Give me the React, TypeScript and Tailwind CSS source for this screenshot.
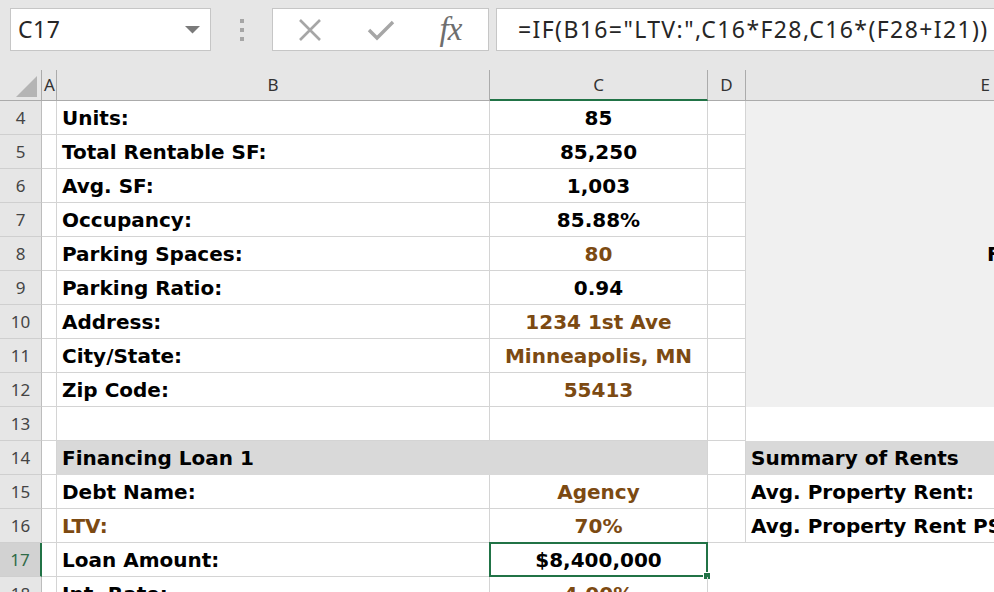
import React from "react";

const GRID = "border-[#d4d4d4]";
const BROWN = "text-[#7c4a12]";

type RowSpec = {
  n: number;
  b?: string;
  c?: string;
  bBrown?: boolean;
  cBrown?: boolean;
  band?: boolean;
  e?: "panel" | "blank" | "band" | "text" | "none";
  eText?: string;
  eMark?: string;
  selected?: boolean;
};

const rows: RowSpec[] = [
  { n: 4, b: "Units:", c: "85", e: "panel" },
  { n: 5, b: "Total Rentable SF:", c: "85,250", e: "panel" },
  { n: 6, b: "Avg. SF:", c: "1,003", e: "panel" },
  { n: 7, b: "Occupancy:", c: "85.88%", e: "panel" },
  { n: 8, b: "Parking Spaces:", c: "80", cBrown: true, e: "panel", eMark: "F" },
  { n: 9, b: "Parking Ratio:", c: "0.94", e: "panel" },
  { n: 10, b: "Address:", c: "1234 1st Ave", cBrown: true, e: "panel" },
  { n: 11, b: "City/State:", c: "Minneapolis, MN", cBrown: true, e: "panel" },
  { n: 12, b: "Zip Code:", c: "55413", cBrown: true, e: "panel" },
  { n: 13, e: "blank" },
  { n: 14, b: "Financing Loan 1", band: true, e: "band", eText: "Summary of Rents" },
  { n: 15, b: "Debt Name:", c: "Agency", cBrown: true, e: "text", eText: "Avg. Property Rent:" },
  { n: 16, b: "LTV:", bBrown: true, c: "70%", cBrown: true, e: "text", eText: "Avg. Property Rent PSF:" },
  { n: 17, b: "Loan Amount:", c: "$8,400,000", e: "none", selected: true },
  { n: 18, b: "Int. Rate:", c: "4.00%", cBrown: true, e: "none" },
];

const cellFont = "font-['DejaVu_Sans',sans-serif] font-bold text-[20px] leading-none";

function NameBox() {
  return (
    <div className="w-[201px] h-[43px] bg-white border border-[#c6c6c6] flex items-center justify-between pl-[7px] pr-[10px]">
      <span className="text-[23px] tracking-[0.5px] text-[#262626] font-['Noto_Sans',sans-serif] leading-none">C17</span>
      <svg width="15" height="8" viewBox="0 0 15 8">
        <path d="M0 0 L15 0 L7.5 7.5 Z" fill="#7a7a7a" />
      </svg>
    </div>
  );
}

function Grip() {
  return (
    <div className="w-[61px] h-[43px] flex flex-col items-center justify-center gap-[5px]">
      <div className="w-[4px] h-[4px] bg-[#a6a6a6]" />
      <div className="w-[4px] h-[4px] bg-[#a6a6a6]" />
      <div className="w-[4px] h-[4px] bg-[#a6a6a6]" />
    </div>
  );
}

function FormulaButtons() {
  return (
    <div className="w-[217px] h-[43px] bg-white border border-[#c6c6c6] flex items-center">
      <div className="w-[74px] flex justify-center">
        <svg width="24" height="24" viewBox="0 0 24 24">
          <path d="M2 2 L22 22 M22 2 L2 22" stroke="#a6a6a6" strokeWidth="2.6" />
        </svg>
      </div>
      <div className="w-[68px] flex justify-center">
        <svg width="28" height="22" viewBox="0 0 28 22">
          <path d="M2 11 L10 19 L26 3" stroke="#a6a6a6" strokeWidth="3.4" fill="none" />
        </svg>
      </div>
      <div className="flex-1 flex justify-center pr-[2px]">
        <span className="font-['Liberation_Serif',serif] italic text-[33px] leading-none text-[#6e6e6e] tracking-[-1px]">fx</span>
      </div>
    </div>
  );
}

function FormulaInput() {
  return (
    <div className="flex-1 h-[43px] bg-white border border-r-0 border-[#c6c6c6] flex items-center pl-[21px] overflow-hidden whitespace-nowrap">
      <span className="text-[23px] tracking-[1.4px] text-[#262626] font-['Noto_Sans',sans-serif] leading-none">
        =IF(B16="LTV:",C16*F28,C16*(F28+I21))
      </span>
    </div>
  );
}

function HeaderRow() {
  const hdr = "h-[31px] border-r border-b border-[#ababab] flex items-center justify-center text-[17px] text-[#333] font-['Noto_Sans',sans-serif] bg-[#e6e6e6]";
  return (
    <div className="grid grid-cols-[42px_15px_433px_218px_38px_1fr]">
      <div className={`${hdr} items-end justify-end pr-[4px] pb-[3px]`}>
        <svg width="21" height="21" viewBox="0 0 21 21">
          <path d="M21 0 L21 21 L0 21 Z" fill="#b4b4b4" />
        </svg>
      </div>
      <div className={`${hdr} justify-start pl-[2px]`}>A</div>
      <div className={hdr}>B</div>
      <div className={`${hdr} bg-[#d2d2d2] text-[#3d6b4e] border-b-2 border-b-[#217346]`}>C</div>
      <div className={hdr}>D</div>
      <div className={`${hdr} border-r-0 justify-end pr-[4px]`}>E</div>
    </div>
  );
}

function SheetRow({ r }: { r: RowSpec }) {
  const rowHead = r.selected
    ? "bg-[#d2d2d2] text-[#2f6b47] border-r-2 border-r-[#217346]"
    : "bg-[#e6e6e6] text-[#444] border-r border-r-[#bdbdbd]";

  let eCell: React.ReactNode;
  if (r.e === "panel") {
    eCell = (
      <div className="h-[34px] bg-[#f0f0f0] flex items-center overflow-hidden whitespace-nowrap pl-[241px]">
        {r.eMark && <span className={cellFont}>{r.eMark}</span>}
      </div>
    );
  } else if (r.e === "band") {
    eCell = (
      <div className={`h-[34px] bg-[#d9d9d9] flex items-center pl-[5px] overflow-hidden whitespace-nowrap ${cellFont}`}>
        {r.eText}
      </div>
    );
  } else if (r.e === "text") {
    eCell = (
      <div className={`h-[34px] border-b ${GRID} flex items-center pl-[5px] overflow-hidden whitespace-nowrap ${cellFont}`}>
        {r.eText}
      </div>
    );
  } else {
    eCell = <div className="h-[34px]" />;
  }

  const lastBlock = r.e === "none";

  return (
    <div className="grid grid-cols-[42px_15px_433px_218px_38px_1fr]">
      <div className={`h-[34px] border-b border-b-[#cfcfcf] flex items-center justify-center text-[17px] font-['Noto_Sans',sans-serif] ${rowHead}`}>
        {r.n}
      </div>
      <div className={`h-[34px] border-r border-b ${GRID}`} />
      {r.band ? (
        <div className={`col-span-2 h-[34px] bg-[#d9d9d9] border-r ${GRID} flex items-center pl-[5px] ${cellFont} text-black`}>
          {r.b}
        </div>
      ) : (
        <>
          <div className={`h-[34px] border-r border-b ${GRID} flex items-center pl-[5px] whitespace-nowrap ${cellFont} ${r.bBrown ? BROWN : "text-black"}`}>
            {r.b}
          </div>
          <div className={`relative h-[34px] border-r border-b ${GRID} flex items-center justify-center whitespace-nowrap ${cellFont} ${r.cBrown ? BROWN : "text-black"}`}>
            {r.c}
            {r.selected && (
              <>
                <div className="absolute -left-[1px] -top-[1px] -right-[1px] -bottom-[1px] border-2 border-[#217346]" />
                <div className="absolute -right-[4px] -bottom-[4px] w-[8px] h-[8px] bg-[#217346] border border-white" />
              </>
            )}
          </div>
        </>
      )}
      <div className={`h-[34px] ${lastBlock ? "" : `border-r border-b ${GRID}`}`} />
      {eCell}
    </div>
  );
}

export default function App() {
  return (
    <div className="w-[994px] h-[592px] overflow-hidden bg-white">
      <div className="h-[70px] bg-[#e6e6e6] flex items-start pt-[8px] pl-[10px] gap-0">
        <NameBox />
        <Grip />
        <FormulaButtons />
        <div className="w-[7px]" />
        <FormulaInput />
      </div>
      <HeaderRow />
      {rows.map((r) => (
        <SheetRow key={r.n} r={r} />
      ))}
    </div>
  );
}
